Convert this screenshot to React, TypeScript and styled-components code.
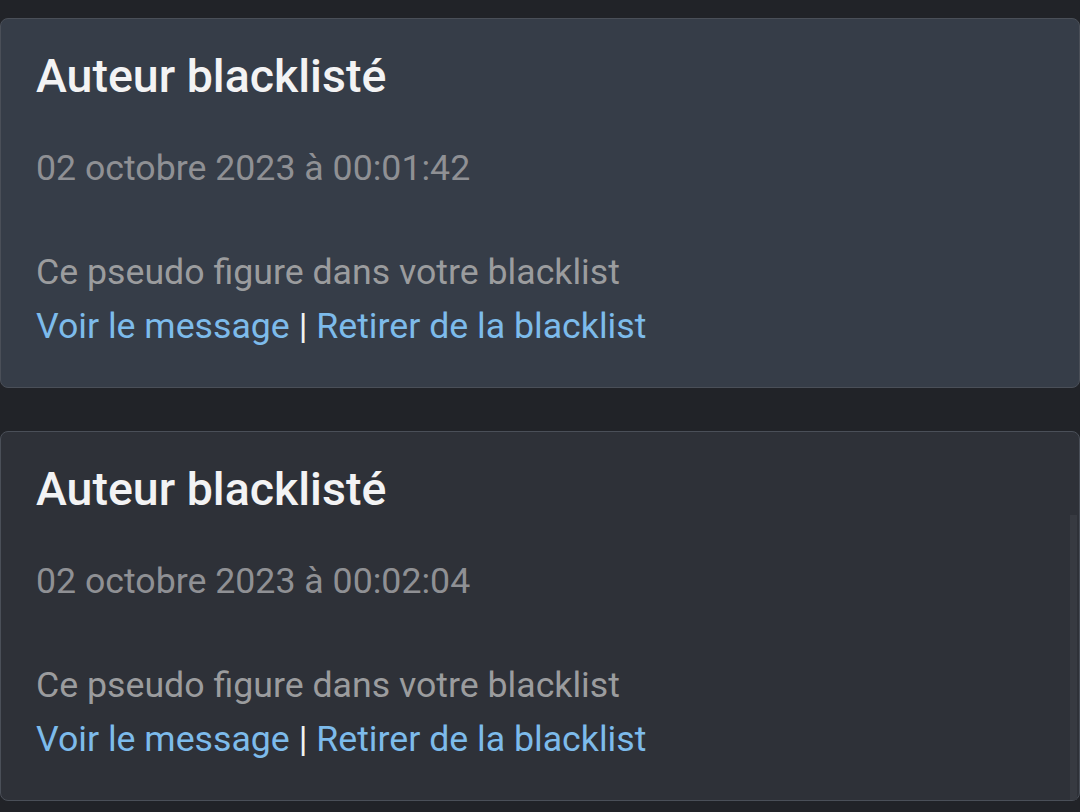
import React from "react";
import styled, { createGlobalStyle } from "styled-components";

const GlobalStyle = createGlobalStyle`
  html, body {
    margin: 0;
    padding: 0;
    background: #212328;
    font-family: Roboto, "Noto Sans", sans-serif;
  }
`;

const Page = styled.div`
  padding-top: 18px;
  display: flex;
  flex-direction: column;
  gap: 43px;
`;

const Card = styled.div<{ $active?: boolean }>`
  position: relative;
  box-sizing: border-box;
  background: ${(p) => (p.$active ? "#363d48" : "#2e3138")};
  border: 1.5px solid #4a4f58;
  border-radius: 8px;
  padding: 33px 35px 34px;
  height: 370px;
`;

const Title = styled.h2`
  margin: 0;
  font-size: 46.5px;
  font-weight: 500;
  line-height: 48px;
  color: #f3f3f4;
`;

const Date = styled.div`
  margin-top: 48px;
  font-size: 35.7px;
  line-height: 40px;
  color: #8f9094;
`;

const Body = styled.div`
  margin-top: 57px;
  font-size: 35.7px;
  line-height: 54px;
  color: #9b9c9e;
`;

const Link = styled.a`
  color: #7dbbeb;
  text-decoration: none;
`;

const Sep = styled.span`
  color: #f2f2f2;
`;

const Track = styled.div`
  position: absolute;
  right: 2px;
  top: 83px;
  bottom: 0;
  width: 7px;
  background: #373a41;
`;

type Item = { date: string; active?: boolean };

const items: Item[] = [
  { date: "02 octobre 2023 à 00:01:42", active: true },
  { date: "02 octobre 2023 à 00:02:04" },
];

export default function App() {
  return (
    <>
      <GlobalStyle />
      <Page>
        {items.map((item, i) => (
          <Card key={i} $active={item.active}>
            <Title>Auteur blacklisté</Title>
            <Date>{item.date}</Date>
            <Body>
              Ce pseudo figure dans votre blacklist
              <br />
              <Link href="#">Voir le message</Link> <Sep>|</Sep>{" "}
              <Link href="#">Retirer de la blacklist</Link>
            </Body>
            {!item.active && <Track />}
          </Card>
        ))}
      </Page>
    </>
  );
}
